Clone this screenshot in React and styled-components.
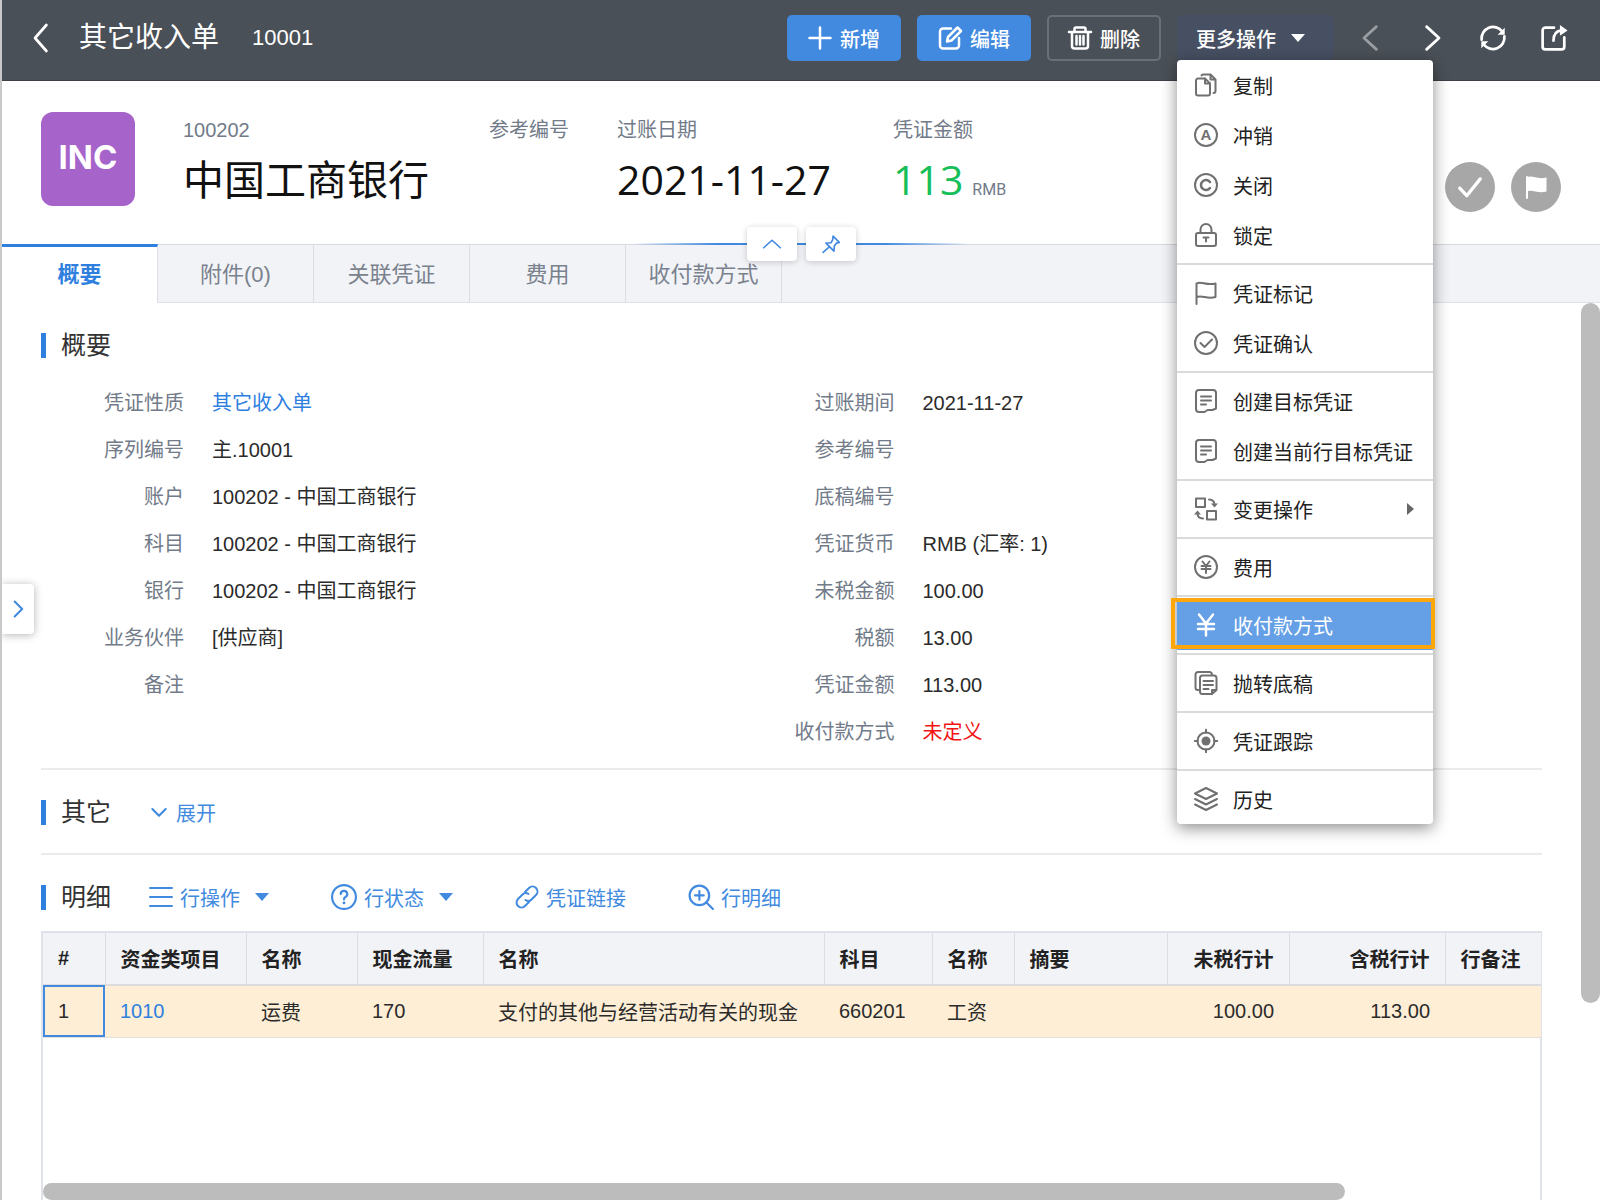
import React from 'react'
import styled, { createGlobalStyle, css } from 'styled-components'

const GlobalStyle = createGlobalStyle`
    * {
        box-sizing: border-box;
    }

    body {
        margin: 0;
        font-family: "Liberation Sans", "Noto Sans CJK SC", sans-serif;
        font-size: 20px;
        color: #2b2b2b;
        background: #fff;
    }

    button {
        font: inherit;
        color: inherit;
        border: 0;
        padding: 0;
        background: none;
        cursor: pointer;
    }

    a {
        color: #2f7fdf;
        text-decoration: none;
    }
`

const SvgStyled = styled.svg`
    display: block;
    flex: none;
    width: ${(p) => p.$size}px;
    height: ${(p) => p.$size}px;
    fill: none;
    stroke: currentColor;
    stroke-width: ${(p) => p.$stroke};
    stroke-linecap: round;
    stroke-linejoin: round;

    .solid {
        fill: currentColor;
        stroke: none;
    }

    text {
        fill: currentColor;
        stroke: none;
        font: bold 15px "Liberation Sans", sans-serif;
        text-anchor: middle;
    }
`

const shapes = {
    back: <path d="M17 0 6.500 12 17 24" />,
    prev: <path d="M17 1.500 5.500 12 17 22.500" />,
    next: <path d="M7 1.500 18.500 12 7 22.500" />,
    plus: <path d="M12 1.500v21M1.500 12h21" />,
    edit: (
        <>
            <path d="M13 2.500H5A3 3 0 0 0 2 5.500V19.500a3 3 0 0 0 3 3h13a3 3 0 0 0 3-3V12" />
            <path d="m9 15.500 1-4.500L19.500 1.500l3.500 3.500-9.500 9.500z" />
        </>
    ),
    trash: (
        <path d="M1 6h22M6.500 5.500V3A1.500 1.500 0 0 1 8 1.500h8A1.500 1.500 0 0 1 17.500 3v2.500M4 6.500v13.500a2.500 2.500 0 0 0 2.500 2.500h11a2.500 2.500 0 0 0 2.500-2.500V6.500M8.500 10v8.500M12 10v8.500M15.500 10v8.500" />
    ),
    refresh: (
        <>
            <path d="M1.500 13.500A10.600 10.600 0 0 1 20.500 6M22.500 10.500A10.600 10.600 0 0 1 3.500 18" />
            <path className="solid" d="M22.800 2.500v6.500h-6.500zM1.200 21.500V15h6.500z" />
        </>
    ),
    share: (
        <>
            <path d="M12 2.500H4A2.500 2.500 0 0 0 1.500 5V20A2.500 2.500 0 0 0 4 22.500H19a2.500 2.500 0 0 0 2.500-2.500V11.500" />
            <path d="M11.500 14.500c0-5.500 2.500-9 7.500-9.500" />
            <path className="solid" d="M17.500 0 24.500 5l-7 5z" />
        </>
    ),
    copy: (
        <>
            <path d="M2 7.500a2 2 0 0 1 2-2h7l5 5v10a2 2 0 0 1-2 2H4a2 2 0 0 1-2-2z" />
            <path d="M11 5.500v5h5M7.500 2.500a2 2 0 0 1 1.500-1h7.500l5 5v11.500a2 2 0 0 1-2 2M16.500 1.500v5h5" />
        </>
    ),
    reverse: (
        <>
            <circle cx="12" cy="12" r="11" />
            <text x="12" y="17">A</text>
        </>
    ),
    close: (
        <>
            <circle cx="12" cy="12" r="11" />
            <path strokeWidth="2.500" d="M16 9a5 5 0 1 0 0 6" />
        </>
    ),
    lock: (
        <>
            <rect x="2" y="10" width="20" height="13" rx="2" />
            <path d="M6.500 10V6.500a5.500 5.500 0 0 1 11 0V10M9.500 14.500h5M12 14.500v4" />
        </>
    ),
    flag: <path d="M2.500 23V2.500c5-3 9 2.500 19 0v13.500c-9 2.500-13-2.500-19 0" />,
    confirm: (
        <>
            <circle cx="12" cy="12" r="11" />
            <path d="m6.500 12 4 4 7.500-7.500" />
        </>
    ),
    target: (
        <>
            <path d="M5 1h14a3 3 0 0 1 3 3v15.500l-3.500 1.500h-5l-3 2H5a3 3 0 0 1-3-3V4a3 3 0 0 1 3-3z" />
            <path d="M7 7.500h10M7 11.500h10M7 15.500h5" />
        </>
    ),
    change: (
        <>
            <rect x="2" y="1.500" width="9" height="8.500" />
            <rect x="13" y="14" width="9" height="8.500" />
            <path d="M15 2.500c3.500 0 5.500 2 5.500 5.500M9 21.500c-3.500 0-5.500-2-5.500-5.500" />
            <path className="solid" d="M17 6.500h7l-3.500 4zM0 17.500h7l-3.500-4z" />
        </>
    ),
    fee: (
        <>
            <circle cx="12" cy="12" r="11" />
            <path d="m8.500 6.500 3.500 4.500 3.500-4.500M7.500 11h9M7.500 14h9M12 11v7" />
        </>
    ),
    yuan: <path d="m5 1.500 7 9 7-9M4 11h16M4 16h16M12 10.500v12" />,
    draft: (
        <>
            <path d="M5.500 19H4a2.500 2.500 0 0 1-2.500-2.500V3.500A2.500 2.500 0 0 1 4 1h11.500A2.500 2.500 0 0 1 18 3.500" />
            <path d="M8.500 4.500H20A2.500 2.500 0 0 1 22.500 7v12l-4.500 4H8.500A2.500 2.500 0 0 1 6 20.500V7a2.500 2.500 0 0 1 2.500-2.500zM9.500 10H19M9.500 14H19M9.500 18h5M18 23v-4h4.500" />
        </>
    ),
    track: (
        <>
            <circle cx="12" cy="12" r="8.500" />
            <circle className="solid" cx="12" cy="12" r="4.500" />
            <path d="M12 .800v3M12 20.200v3M.800 12h3M20.200 12h3" />
        </>
    ),
    history: (
        <path d="m12 1 11 5.500L12 12 1 6.500zM1 12l11 5.500L23 12M1 17.500 12 23l11-5.500" />
    ),
    down: <path d="m4 8.500 8 8 8-8" />,
    up: <path d="m2 16.500 10-9 10 9" />,
    right: <path d="m8 3 9 9-9 9" />,
    pin: <path d="m14.500 2.500 7.500 7.500-3.500 1-2.500 3.500-.500 6-9.500-9.500 6-.500 2-3.500zM10 15.500 2.500 22" />,
    lines: <path d="M1 3h22M1 12h22M1 21h22" />,
    question: (
        <>
            <circle cx="12" cy="12" r="11" />
            <path d="M9 9.300a3 3 0 1 1 4.300 2.700c-1 .500-1.300 1-1.300 2.200" />
            <circle className="solid" cx="12" cy="17.500" r="1.300" />
        </>
    ),
    link: (
        <>
            <path d="m10 7 4-4a4.700 4.700 0 0 1 7 7l-4.500 4.500a4.700 4.700 0 0 1-6 .500" />
            <path d="m14 17-4 4a4.700 4.700 0 0 1-7-7l4.500-4.500a4.700 4.700 0 0 1 6-.500" />
        </>
    ),
    zoom: (
        <>
            <circle cx="10.500" cy="10.500" r="9" />
            <path d="M17 17l6 6M10.500 6.500v8M6.500 10.500h8" />
        </>
    ),
    check: <path d="m2.500 13 6.500 7L21.500 4.500" />,
    flagSolid: (
        <>
            <path d="M3 2v21" />
            <path className="solid" d="M2.500 2.500c6-3 10 2.500 20 0v14c-9 2.500-14-2.500-20 0z" />
        </>
    ),
}

const Icon = ({ name, size = 24, stroke = 2 }) => (
    <SvgStyled viewBox="0 0 24 24" $size={size} $stroke={stroke} overflow="visible" aria-hidden="true">
        {shapes[name]}
    </SvgStyled>
)

const Caret = styled.span`
    flex: none;
    border: 7px solid transparent;
    border-top: 8px solid currentColor;
    border-bottom: 0;

    ${(p) => p.$right && css`
        margin-left: auto;
        color: #666;
        border: 6px solid transparent;
        border-left: 7px solid currentColor;
        border-right: 0;
    `}
`

const PageStyled = styled.div`
    position: relative;
    display: flex;
    flex-direction: column;
    height: 100vh;
    overflow: hidden;
    border-left: 2px solid #c9c9c9;
`

const HeaderStyled = styled.header`
    display: flex;
    align-items: center;
    flex: none;
    height: 81px;
    padding: 0 33px 4px 26px;
    color: #fff;
    background: #4a5057;
    border-bottom: 1px solid #3c4147;
`

const TitleStyled = styled.h1`
    margin: 0 33px 0 25px;
    font-size: 28px;
    line-height: 38px;
    font-weight: normal;
`

const NumberStyled = styled.span`
    flex: 1;
    font-size: 22px;
`

const ToolbarStyled = styled.div`
    display: flex;
    align-items: center;
    gap: 16px;
`

const ToolButton = styled.button`
    display: flex;
    align-items: center;
    justify-content: center;
    gap: 8px;
    width: 114px;
    height: 46px;
    border-radius: 5px;
    font-weight: 500;
    background: #418ae0;

    ${(p) => p.$outlined && css`
        background: transparent;
        border: 2px solid #6a7078;
    `}
`

const MoreWrapper = styled.div`
    position: relative;
`

const MoreButton = styled(ToolButton)`
    justify-content: flex-start;
    gap: 15px;
    width: 157px;
    padding-left: 19px;
    background: #465062;
`

const NavStyled = styled.nav`
    display: flex;
    align-items: center;
    gap: 35px;
    margin-left: 8px;

    button:first-child {
        color: #9a9ea3;
    }
`

const MenuStyled = styled.div`
    position: absolute;
    z-index: 10;
    top: 45px;
    left: 0;
    width: 256px;
    color: #222;
    background: #fff;
    border-radius: 4px;
    box-shadow: 0 4px 16px rgba(0, 0, 0, 0.45);
`

const MenuDivider = styled.hr`
    height: 2px;
    margin: 3px 0;
    border: 0;
    background: #dadada;
`

const MenuItem = styled.button`
    position: relative;
    display: flex;
    align-items: center;
    gap: 15px;
    width: 100%;
    height: 50px;
    padding: 0 19px 0 17px;
    white-space: nowrap;

    svg {
        color: #707070;
    }

    ${(p) => p.$active && css`
        color: #fff;
        background: #65a0e6;

        svg {
            color: #fff;
        }

        &::after {
            content: "";
            position: absolute;
            inset: -2px -2px 1px -6px;
            border: 4px solid #ffa60a;
        }
    `}
`

const SummaryStyled = styled.section`
    display: flex;
    flex: none;
    height: 163px;
    padding: 31px 39px 0 39px;
`

const BadgeStyled = styled.div`
    display: flex;
    align-items: center;
    justify-content: center;
    width: 94px;
    height: 94px;
    padding-bottom: 4px;
    margin-right: 48px;
    border-radius: 12px;
    font-family: Inter, sans-serif;
    font-size: 33px;
    font-weight: 700;
    color: #fff;
    background: #a664cb;
`

const FactsStyled = styled.dl`
    flex: 1;
    display: grid;
    grid-template-columns: 306px 128px 276px auto;
    align-content: start;
    margin: 0;

    dt {
        height: 36px;
        line-height: 36px;
        color: #727b89;
    }

    dd {
        display: flex;
        align-items: baseline;
        gap: 9px;
        margin: 0;
        font-family: "Open Sans", "Noto Sans CJK SC", sans-serif;
        font-size: 41px;
        font-weight: 400;
        line-height: 62px;
        color: #111;
        white-space: nowrap;
    }
`

const Amount = styled.span`
    color: #15be58;
`

const Currency = styled.small`
    font-family: Roboto, sans-serif;
    font-size: 16px;
    color: #727b89;
`

const MarksStyled = styled.div`
    display: flex;
    gap: 16px;
    padding-top: 50px;
`

const MarkButton = styled.button`
    display: flex;
    align-items: center;
    justify-content: center;
    width: 50px;
    height: 50px;
    border-radius: 50%;
    color: #fff;
    background: #a7a7a7;
`

const TabBarStyled = styled.div`
    position: relative;
    display: flex;
    flex: none;
    height: 59px;
    background: #f2f3f7;
    border-top: 1px solid #d6d9df;
    border-bottom: 1px solid #dfe1e7;
`

const Tab = styled.button`
    width: 156px;
    height: 58px;
    padding-bottom: 4px;
    font-size: 22px;
    color: #7a828e;
    border-right: 1px solid #dcdee4;

    ${(p) => p.$active && css`
        margin-top: -1px;
        height: 59px;
        padding-bottom: 6px;
        font-weight: 700;
        color: #2f7fdf;
        background: #fff;
        border-top: 3px solid #2f7fdf;
    `}
`

const HandleStyled = styled.div`
    position: absolute;
    top: -18px;
    left: 50%;
    display: flex;
    justify-content: center;
    gap: 9px;
    width: 336px;
    margin-left: -168px;
    background: linear-gradient(to right, transparent, #418ae0 25%, #418ae0 75%, transparent) center / 100% 2px no-repeat;
`

const HandleButton = styled.button`
    display: flex;
    align-items: center;
    justify-content: center;
    width: 50px;
    height: 34px;
    border-radius: 4px;
    color: #418ae0;
    background: #fff;
    box-shadow: 0 1px 6px rgba(0, 0, 0, 0.2);
`

const BodyStyled = styled.div`
    display: flex;
    flex: 1;
    min-height: 0;
`

const ContentStyled = styled.main`
    display: flex;
    flex-direction: column;
    flex: 1;
    min-width: 0;
    padding: 0 39px;
`

const ScrollTrack = styled.div`
    width: 19px;

    &::before {
        content: "";
        display: block;
        height: 78%;
        border-radius: 10px;
        background: #bcbcbc;
    }
`

const SectionHead = styled.div`
    display: flex;
    align-items: center;
    height: 84px;
    color: #418ae0;
`

const SectionTitle = styled.h2`
    margin: 0 38px 0 0;
    padding-left: 15px;
    border-left: 5px solid #2f7fdf;
    font-size: 25px;
    font-weight: normal;
    line-height: 25px;
    color: #333;
`

const FieldsStyled = styled.div`
    display: grid;
    grid-template-columns: 71fr 79fr;
    margin-top: -7px;
    padding-bottom: 12px;
    border-bottom: 2px solid #ebebeb;

    dl {
        margin: 0;
    }
`

const Field = styled.div`
    display: flex;
    line-height: 47px;

    dt {
        width: 143px;
        text-align: right;
        color: #727b89;
    }

    dd {
        margin: 0 0 0 28px;
        color: ${(p) => (p.$warn ? '#f31414' : '#2b2b2b')};
    }
`

const Collapsed = styled.section`
    height: 85px;
    border-bottom: 2px solid #ebebeb;
`

const LinkButton = styled.button`
    display: flex;
    align-items: center;
    gap: 7px;
    white-space: nowrap;

    & + & {
        margin-left: 62px;
    }

    ${Caret} {
        margin-left: 8px;
    }
`

const GridStyled = styled.section`
    display: flex;
    flex-direction: column;
    flex: 1;
    margin-top: -8px;
    border: 2px solid #dfe2e8;
    border-bottom: 0;
`

const TableStyled = styled.table`
    width: 100%;
    table-layout: fixed;
    border-collapse: collapse;

    th, td {
        height: 52px;
        padding: 0 15px;
        text-align: left;
        white-space: nowrap;
    }

    th {
        font-weight: bold;
        color: #222;
        background: #f2f3f7;
        border-bottom: 2px solid #dcdcdf;
    }

    th + th {
        border-left: 1px solid #dcdee4;
    }

    td {
        background: #fdeed5;
        border-bottom: 1px solid #e3e0dc;
    }

    td:first-child {
        outline: 2px solid #418ae0;
        outline-offset: -2px;
    }

    .number {
        text-align: right;
    }
`

const HorizontalThumb = styled.div`
    width: 87%;
    height: 17px;
    margin-top: auto;
    border-radius: 9px;
    background: #bcbcbc;
`

const DrawerButton = styled.button`
    position: absolute;
    top: 584px;
    left: 0;
    display: flex;
    align-items: center;
    justify-content: center;
    width: 32px;
    height: 50px;
    border-radius: 0 4px 4px 0;
    color: #418ae0;
    background: #fff;
    box-shadow: 0 1px 8px rgba(0, 0, 0, 0.3);
`

const menuGroups = [
    [['copy', '复制'], ['reverse', '冲销'], ['close', '关闭'], ['lock', '锁定']],
    [['flag', '凭证标记'], ['confirm', '凭证确认']],
    [['target', '创建目标凭证'], ['target', '创建当前行目标凭证']],
    [['change', '变更操作']],
    [['fee', '费用']],
    [['yuan', '收付款方式']],
    [['draft', '抛转底稿']],
    [['track', '凭证跟踪']],
    [['history', '历史']],
]

const tabs = ['概要', '附件(0)', '关联凭证', '费用', '收付款方式']

const leftFields = [
    ['凭证性质', <a href="#type">其它收入单</a>],
    ['序列编号', '主.10001'],
    ['账户', '100202 - 中国工商银行'],
    ['科目', '100202 - 中国工商银行'],
    ['银行', '100202 - 中国工商银行'],
    ['业务伙伴', '[供应商]'],
    ['备注', ''],
]

const rightFields = [
    ['过账期间', '2021-11-27'],
    ['参考编号', ''],
    ['底稿编号', ''],
    ['凭证货币', 'RMB (汇率: 1)'],
    ['未税金额', '100.00'],
    ['税额', '13.00'],
    ['凭证金额', '113.00'],
    ['收付款方式', '未定义', true],
]

const columns = [
    { title: '#', width: 62, value: '1' },
    { title: '资金类项目', width: 141, value: <a href="#1010">1010</a> },
    { title: '名称', width: 111, value: '运费' },
    { title: '现金流量', width: 126, value: '170' },
    { title: '名称', width: 341, value: '支付的其他与经营活动有关的现金' },
    { title: '科目', width: 108, value: '660201' },
    { title: '名称', width: 82, value: '工资' },
    { title: '摘要', width: 153, value: '' },
    { title: '未税行计', width: 122, value: '100.00', number: true },
    { title: '含税行计', width: 156, value: '113.00', number: true },
    { title: '行备注', width: 96, value: '' },
]

const ColStyled = styled.col`
    width: ${(p) => p.$width}px;
`

function MoreMenu() {
    return (
        <MenuStyled role="menu">
            {menuGroups.map((group, i) => (
                <React.Fragment key={i}>
                    {i > 0 && <MenuDivider />}
                    {group.map(([icon, label]) => (
                        <MenuItem key={label} role="menuitem" $active={icon === 'yuan'}>
                            <Icon name={icon} stroke={icon === 'yuan' ? 2.5 : 2} />
                            {label}
                            {icon === 'change' && <Caret $right />}
                        </MenuItem>
                    ))}
                </React.Fragment>
            ))}
        </MenuStyled>
    )
}

function FieldList({ fields }) {
    return (
        <dl>
            {fields.map(([label, value, warn]) => (
                <Field key={label} $warn={warn}>
                    <dt>{label}</dt>
                    <dd>{value}</dd>
                </Field>
            ))}
        </dl>
    )
}

function DetailTable() {
    return (
        <TableStyled>
            <colgroup>
                {columns.map((c, i) => <ColStyled key={i} $width={c.width} />)}
            </colgroup>
            <thead>
                <tr>
                    {columns.map((c, i) => <th key={i} className={c.number && 'number'}>{c.title}</th>)}
                </tr>
            </thead>
            <tbody>
                <tr>
                    {columns.map((c, i) => <td key={i} className={c.number && 'number'}>{c.value}</td>)}
                </tr>
            </tbody>
        </TableStyled>
    )
}

export default function App() {
    return (
        <PageStyled>
            <GlobalStyle />
            <HeaderStyled>
                <button aria-label="返回"><Icon name="back" size={26} stroke={2.5} /></button>
                <TitleStyled>其它收入单</TitleStyled>
                <NumberStyled>10001</NumberStyled>
                <ToolbarStyled>
                    <ToolButton><Icon name="plus" stroke={2.5} />新增</ToolButton>
                    <ToolButton><Icon name="edit" stroke={2.5} />编辑</ToolButton>
                    <ToolButton $outlined><Icon name="trash" stroke={2.5} />删除</ToolButton>
                    <MoreWrapper>
                        <MoreButton>更多操作<Caret /></MoreButton>
                        <MoreMenu />
                    </MoreWrapper>
                    <NavStyled>
                        <button aria-label="上一个"><Icon name="prev" size={26} stroke={2.5} /></button>
                        <button aria-label="下一个"><Icon name="next" size={26} stroke={2.5} /></button>
                        <button aria-label="刷新"><Icon name="refresh" size={26} stroke={2.5} /></button>
                        <button aria-label="分享"><Icon name="share" size={26} stroke={2.5} /></button>
                    </NavStyled>
                </ToolbarStyled>
            </HeaderStyled>

            <SummaryStyled>
                <BadgeStyled>INC</BadgeStyled>
                <FactsStyled>
                    <div>
                        <dt>100202</dt>
                        <dd>中国工商银行</dd>
                    </div>
                    <div>
                        <dt>参考编号</dt>
                    </div>
                    <div>
                        <dt>过账日期</dt>
                        <dd>2021-11-27</dd>
                    </div>
                    <div>
                        <dt>凭证金额</dt>
                        <dd><Amount>113</Amount><Currency>RMB</Currency></dd>
                    </div>
                </FactsStyled>
                <MarksStyled>
                    <MarkButton aria-label="确认"><Icon name="check" size={26} stroke={3} /></MarkButton>
                    <MarkButton aria-label="标记"><Icon name="flagSolid" size={24} /></MarkButton>
                </MarksStyled>
            </SummaryStyled>

            <TabBarStyled>
                {tabs.map((tab, i) => <Tab key={tab} $active={i === 0}>{tab}</Tab>)}
                <HandleStyled>
                    <HandleButton aria-label="收起"><Icon name="up" size={20} /></HandleButton>
                    <HandleButton aria-label="固定"><Icon name="pin" size={20} /></HandleButton>
                </HandleStyled>
            </TabBarStyled>

            <BodyStyled>
                <ContentStyled>
                    <SectionHead>
                        <SectionTitle>概要</SectionTitle>
                    </SectionHead>
                    <FieldsStyled>
                        <FieldList fields={leftFields} />
                        <FieldList fields={rightFields} />
                    </FieldsStyled>
                    <Collapsed>
                        <SectionHead>
                            <SectionTitle>其它</SectionTitle>
                            <LinkButton><Icon name="down" size={20} stroke={2.5} />展开</LinkButton>
                        </SectionHead>
                    </Collapsed>
                    <SectionHead>
                        <SectionTitle>明细</SectionTitle>
                        <LinkButton><Icon name="lines" />行操作<Caret /></LinkButton>
                        <LinkButton><Icon name="question" size={26} />行状态<Caret /></LinkButton>
                        <LinkButton><Icon name="link" />凭证链接</LinkButton>
                        <LinkButton><Icon name="zoom" size={26} />行明细</LinkButton>
                    </SectionHead>
                    <GridStyled>
                        <DetailTable />
                        <HorizontalThumb />
                    </GridStyled>
                </ContentStyled>
                <ScrollTrack />
            </BodyStyled>

            <DrawerButton aria-label="展开侧栏"><Icon name="right" size={20} stroke={2.5} /></DrawerButton>
        </PageStyled>
    )
}
